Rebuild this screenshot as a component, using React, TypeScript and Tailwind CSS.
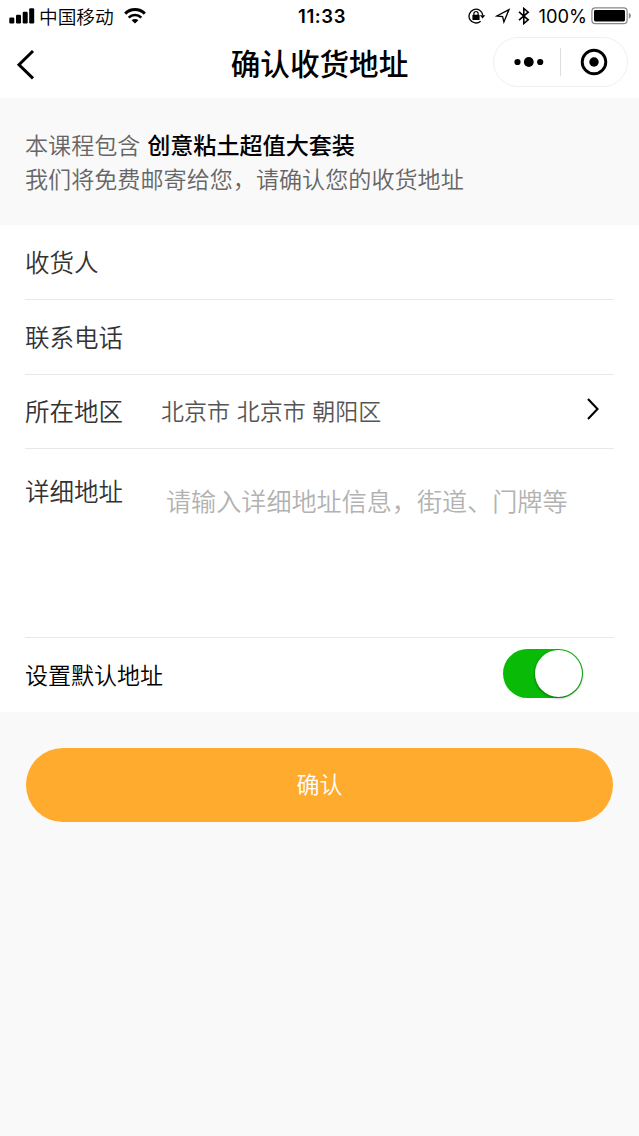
import { useState } from "react";
import type { ReactNode } from "react";

function SignalIcon() {
  return (
    <svg width="26" height="16" viewBox="0 0 26 16" fill="#000">
      <rect x="0.3" y="9.5" width="5" height="6" rx="1.2" />
      <rect x="7" y="6.8" width="5" height="8.7" rx="1.2" />
      <rect x="13.7" y="3.8" width="5" height="11.7" rx="1.2" />
      <rect x="20.2" y="0.3" width="5" height="15.2" rx="1.2" />
    </svg>
  );
}

function WifiIcon() {
  return (
    <svg width="22" height="16" viewBox="0 0 22 16" fill="none" stroke="#000">
      <path d="M1.2 5.6 A14 14 0 0 1 20.8 5.6" strokeWidth="3" />
      <path d="M4.7 9.6 A8.9 8.9 0 0 1 17.3 9.6" strokeWidth="2.7" />
      <path d="M11 15.6 L7.6 12.3 A4.8 4.8 0 0 1 14.4 12.3 Z" fill="#000" stroke="none" />
    </svg>
  );
}

function RotationLockIcon() {
  return (
    <svg width="18" height="16" viewBox="0 0 18 16" fill="none" stroke="#000">
      <path d="M12.6 13.2 A6.9 6.9 0 1 1 14.8 7.4" strokeWidth="1.3" />
      <path d="M11.9 7.2 H17.3 L14.6 10.4 Z" fill="#000" stroke="none" />
      <rect x="4.4" y="6.8" width="7.2" height="5.2" rx="0.6" fill="#000" stroke="none" />
      <path d="M5.9 7.2 V5.6 A2.1 2.1 0 0 1 10.1 5.6 V7.2" strokeWidth="1.2" />
    </svg>
  );
}

function LocationIcon() {
  return (
    <svg width="16" height="16" viewBox="0 0 16 16" fill="none" stroke="#000">
      <path d="M14 1.6 L1.8 8 L7.6 8.6 L8.9 14 Z" strokeWidth="1.3" strokeLinejoin="miter" />
    </svg>
  );
}

function BluetoothIcon() {
  return (
    <svg width="12" height="18" viewBox="0 0 12 18" fill="none" stroke="#000">
      <path d="M1 4.8 L10.2 12.8 L5.8 16.5 V1.5 L10.2 5.2 L1 13.2" strokeWidth="1.6" />
    </svg>
  );
}

function BatteryIcon() {
  return (
    <svg width="41" height="18" viewBox="0 0 41 18" fill="none">
      <rect x="0.9" y="0.9" width="35.2" height="15.7" rx="3.4" stroke="#888" strokeWidth="1.2" />
      <rect x="3" y="3" width="31" height="11.5" rx="1.4" fill="#000" />
      <path d="M37.8 5.8 Q39.9 6.8 39.9 8.8 Q39.9 10.8 37.8 11.8 Z" fill="#888" />
    </svg>
  );
}

function Row({ label, className, children }: { label: string; className: string; children?: ReactNode }) {
  return (
    <div className={`flex border-b border-[#e8e8e8] ${className}`}>
      <span className="w-[136px] shrink-0 text-[24.5px] leading-[36px] text-[#333]">{label}</span>
      {children}
    </div>
  );
}

export default function App() {
  const [isDefault, setIsDefault] = useState(true);

  return (
    <div className="flex min-h-screen w-full flex-col bg-[#f9f9f9] font-['Noto_Sans_CJK_SC_DemiLight','Noto_Sans_CJK_SC',sans-serif] font-[350] text-black">
      {/* STATUS BAR */}
      <div className="grid h-8 grid-cols-[1fr_auto_1fr] items-center bg-white pl-[9px] pr-[7px]">
        <div className="flex items-center">
          <SignalIcon />
          <span className="ml-1 mr-[10px] text-[18.7px] leading-8">中国移动</span>
          <WifiIcon />
        </div>
        <span className="pl-[3px] font-['Inter',sans-serif] text-[18.5px] font-semibold leading-8 tracking-[0.6px]">11:33</span>
        <div className="flex items-center justify-end">
          <RotationLockIcon />
          <span className="ml-[9px]">
            <LocationIcon />
          </span>
          <span className="ml-[7px]">
            <BluetoothIcon />
          </span>
          <span className="ml-[9px] mr-[4px] font-['Inter',sans-serif] text-[18.3px] font-normal leading-8">100%</span>
          <BatteryIcon />
        </div>
      </div>

      {/* NAV */}
      <div className="grid h-[66px] grid-cols-[1fr_auto_1fr] items-start bg-white px-[11px]">
        <button aria-label="返回" className="ml-[5px] mt-[17px] w-fit">
          <svg width="20" height="31" viewBox="0 0 20 31" fill="none" stroke="#000">
            <path d="M17 2 L3 15.7 L17 29.4" strokeWidth="3" />
          </svg>
        </button>
        <h1 className="font-['Noto_Sans_CJK_SC',sans-serif] text-[29.6px] font-medium leading-[62px]">确认收货地址</h1>
        <div className="mt-[5px] flex h-[50px] w-[135px] items-center justify-self-end rounded-full border border-[#efefef]">
          <button aria-label="更多" className="flex w-[66px] items-center justify-center pl-1">
            <svg width="30" height="10" viewBox="0 0 30 10">
              <circle cx="3.5" cy="5" r="3.1" />
              <circle cx="14.8" cy="5" r="4.9" />
              <circle cx="26.2" cy="5" r="3.1" />
            </svg>
          </button>
          <span className="h-[28px] w-px bg-[#dedede]" />
          <button aria-label="关闭" className="flex flex-1 items-center justify-center">
            <svg width="28" height="28" viewBox="0 0 28 28">
              <circle cx="14" cy="14" r="11.8" fill="none" stroke="#000" strokeWidth="2.9" />
              <circle cx="14" cy="14" r="4.7" />
            </svg>
          </button>
        </div>
      </div>

      {/* INTRO */}
      <div className="h-[127px] px-[25px] pt-[29px] text-[23.1px] leading-[34px] text-[#666]">
        <p className="[word-spacing:1.5px]">
          本课程包含 <strong className="font-['Noto_Sans_CJK_SC',sans-serif] font-medium text-black">创意粘土超值大套装</strong>
        </p>
        <p>我们将免费邮寄给您，请确认您的收货地址</p>
      </div>

      {/* FORM */}
      <div className="bg-white px-[25px]">
        <Row label="收货人" className="h-[75px] items-center" />
        <Row label="联系电话" className="h-[75px] items-center" />
        <Row label="所在地区" className="h-[74px] items-center pb-[2px]">
          <span className="flex-1 text-[23px] text-[#555] [word-spacing:1.5px]">北京市 北京市 朝阳区</span>
          <svg width="14" height="24" viewBox="0 0 14 24" fill="none" stroke="#000" className="mb-1 mr-[14px]">
            <path d="M2 2 L11.5 12 L2 22" strokeWidth="2.1" />
          </svg>
        </Row>
        <Row label="详细地址" className="h-[189px] pt-[24px]">
          <textarea
            placeholder="请输入详细地址信息，街道、门牌等"
            className="mt-[9px] h-[140px] flex-1 resize-none pl-[5px] text-[25.1px] leading-[36px] text-[#333] outline-none placeholder:text-[#b2b2b2]"
          />
        </Row>
        <div className="flex h-[74px] items-center justify-between pb-[2px]">
          <span className="text-[23px]">设置默认地址</span>
          <button
            role="switch"
            aria-checked={isDefault}
            aria-label="设置默认地址"
            onClick={() => setIsDefault(!isDefault)}
            className={`mb-[1px] mr-[31px] flex h-[49px] w-[80px] items-center rounded-full p-px transition ${
              isDefault ? "justify-end bg-[#09bb07]" : "justify-start bg-[#dfdfdf]"
            }`}
          >
            <span className="size-[47px] rounded-full bg-white shadow-[0_1px_3px_rgba(0,0,0,0.45)]" />
          </button>
        </div>
      </div>

      {/* SUBMIT */}
      <button className="mx-[26px] mt-[35.5px] h-[74px] rounded-full bg-[#ffab2d] pb-[2px] text-[23px] text-white">确认</button>
    </div>
  );
}
